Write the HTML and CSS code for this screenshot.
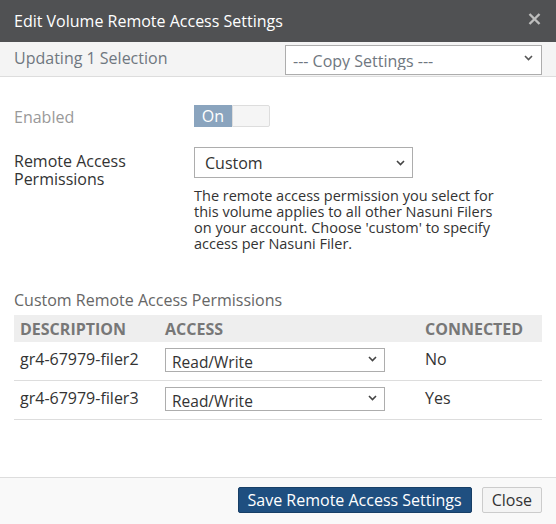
FILE: index.html
```html
<!DOCTYPE html>
<html lang="en">
<head>
    <meta charset="UTF-8">
    <meta name="viewport" content="width=device-width, initial-scale=1.0">
    <title>Edit Volume Remote Access Settings</title>
    <link rel="stylesheet" href="styles.css">
</head>
<body>
    <div class="dialog">
        <header class="dialog-title">
            <h1>Edit Volume Remote Access Settings</h1>
            <svg class="close" width="13" height="12" viewBox="0 0 13 12">
                <path d="M1.5 1 L11.5 11 M11.5 1 L1.5 11" stroke="#bdbdbd" stroke-width="2.4" fill="none"/>
            </svg>
        </header>

        <div class="subheader">
            <span class="subheader-text">Updating 1 Selection</span>
            <div class="select-box copy-select clipped">
                <span>--- Copy Settings ---</span>
                <svg class="chevron" width="9" height="6" viewBox="0 0 9 6"><path d="M1 1 L4.5 4.5 L8 1" stroke="#555" stroke-width="1.6" fill="none"/></svg>
            </div>
        </div>

        <div class="dialog-body">
            <div class="form-row first">
                <div class="form-label muted">Enabled</div>
                <div class="toggle">
                    <span class="toggle-on">On</span>
                    <span class="toggle-off"></span>
                </div>
            </div>

            <div class="form-row">
                <div class="form-label">Remote Access Permissions</div>
                <div class="form-control">
                    <div class="select-box perm-select">
                        <span>Custom</span>
                        <svg class="chevron" width="9" height="6" viewBox="0 0 9 6"><path d="M1 1 L4.5 4.5 L8 1" stroke="#444" stroke-width="1.6" fill="none"/></svg>
                    </div>
                    <p class="help">The remote access permission you select for this volume applies to all other Nasuni Filers on your account. Choose 'custom' to specify access per Nasuni Filer.</p>
                </div>
            </div>

            <div class="section-title">Custom Remote Access Permissions</div>
            <table class="perm-table">
                <thead>
                    <tr>
                        <th class="col-desc">Description</th>
                        <th class="col-access">Access</th>
                        <th class="col-conn">Connected</th>
                    </tr>
                </thead>
                <tbody>
                    <tr>
                        <td>gr4-67979-filer2</td>
                        <td>
                            <div class="select-box row-select clipped">
                                <span>Read/Write</span>
                                <svg class="chevron" width="9" height="6" viewBox="0 0 9 6"><path d="M1 1 L4.5 4.5 L8 1" stroke="#444" stroke-width="1.6" fill="none"/></svg>
                            </div>
                        </td>
                        <td>No</td>
                    </tr>
                    <tr>
                        <td>gr4-67979-filer3</td>
                        <td>
                            <div class="select-box row-select clipped">
                                <span>Read/Write</span>
                                <svg class="chevron" width="9" height="6" viewBox="0 0 9 6"><path d="M1 1 L4.5 4.5 L8 1" stroke="#444" stroke-width="1.6" fill="none"/></svg>
                            </div>
                        </td>
                        <td>Yes</td>
                    </tr>
                </tbody>
            </table>
        </div>

        <footer class="dialog-footer">
            <button class="btn btn-primary">Save Remote Access Settings</button>
            <button class="btn">Close</button>
        </footer>
    </div>
</body>
</html>
```

FILE: styles.css
```css
/* Dialog styles */
body {
    font-family: "Open Sans", Arial, sans-serif;
    font-size: 16px;
    color: #333;
    background-color: #fff;
    margin: 0;
    padding: 0;
}
.dialog {
    width: 556px;
    height: 524px;
    display: flex;
    flex-direction: column;
}
.dialog-title {
    height: 42px;
    background-color: #505153; /* Dark title bar */
    color: #fff;
    display: flex;
    align-items: center;
    justify-content: space-between;
    padding: 0 15px 0 14px;
    flex-shrink: 0;
}
.dialog-title h1 {
    font-size: 16px;
    font-weight: normal;
    margin: 0;
}
.close {
    display: block;
    margin-top: -4px;
}
.subheader {
    height: 34px;
    background-color: #f4f4f4;
    border-bottom: 1px solid #ddd;
    display: flex;
    align-items: flex-start;
    justify-content: space-between;
    padding: 0 14px;
    flex-shrink: 0;
}
.subheader-text {
    color: #6f7780;
    line-height: 34px;
    margin-top: -1px;
}

.select-box {
    box-sizing: border-box;
    background-color: #fff;
    border: 1px solid #adadad;
    display: flex;
    align-items: center;
    justify-content: space-between;
    overflow: hidden;
}
.select-box .chevron {
    flex-shrink: 0;
}
.select-box.clipped {
    align-items: flex-start;
}
.select-box.clipped span {
    display: block;
    overflow: hidden;
}
.copy-select {
    width: 257px;
    height: 30px;
    margin-top: 3px;
    padding: 4px 8px 0 7px;
    color: #6f7780;
}
.copy-select span {
    line-height: 22px;
    height: 20px;
}
.copy-select .chevron {
    margin-top: 5px;
}
.perm-select {
    width: 219px;
    height: 31px;
    padding: 0 7px 0 10px;
}
.row-select {
    width: 220px;
    height: 24px;
    padding: 3px 7px 0 6px;
    font-size: 15.5px;
}
.row-select span {
    line-height: 20px;
    height: 18px;
}
.row-select .chevron {
    margin-top: 4px;
}

.dialog-body {
    flex: 1;
    padding: 28px 14px 0 14px;
}
.form-row {
    display: flex;
    align-items: flex-start;
    margin-bottom: 19px;
}
.form-label {
    width: 180px;
    line-height: 18px;
    padding-top: 5px;
}
.form-row.first .form-label {
    line-height: 22px;
    padding-top: 1px;
}
.form-label.muted {
    color: #999;
}
.form-control {
    width: 308px;
}
.toggle {
    display: flex;
    height: 22px;
}
.toggle-on {
    width: 38px;
    background-color: #8aa4be;
    color: #fff;
    line-height: 22px;
    text-align: center;
}
.toggle-off {
    width: 36px;
    background-color: #f5f5f5;
    border: 1px solid #ddd;
    border-radius: 0 2px 2px 0;
}
.help {
    margin: 10px 0 0 0;
    font-size: 14.5px;
    line-height: 16px;
    color: #333;
}
.section-title {
    margin-top: 38px;
    color: #666;
    line-height: 20px;
    margin-bottom: 5px;
}
.perm-table {
    width: 528px;
    border-collapse: collapse;
}
.perm-table th {
    background-color: #eee;
    color: #777;
    font-weight: bold;
    text-transform: uppercase;
    text-align: left;
    height: 27px;
    padding: 0 6px;
}
.col-desc {
    width: 133px;
}
.col-access {
    width: 248px;
}
.perm-table td {
    height: 38px;
    padding: 0 6px;
    border-bottom: 1px solid #ddd;
    vertical-align: top;
    line-height: 34px;
}
.perm-table td .select-box {
    margin-top: 6px;
}

.dialog-footer {
    height: 46px;
    border-top: 1px solid #ddd;
    background-color: #f9f9f9;
    display: flex;
    align-items: center;
    justify-content: flex-end;
    gap: 10px;
    padding: 0 14px;
    flex-shrink: 0;
}
.btn {
    font-family: "Open Sans", Arial, sans-serif;
    font-size: 16px;
    height: 26px;
    padding: 0 9px;
    background-color: #f4f4f4;
    border: 1px solid #ccc;
    border-radius: 2px;
    color: #333;
    margin-top: -3px;
}
.btn-primary {
    background-color: #1f4f80; /* Dark blue */
    border-color: #183f66;
    color: #fff;
}
```
